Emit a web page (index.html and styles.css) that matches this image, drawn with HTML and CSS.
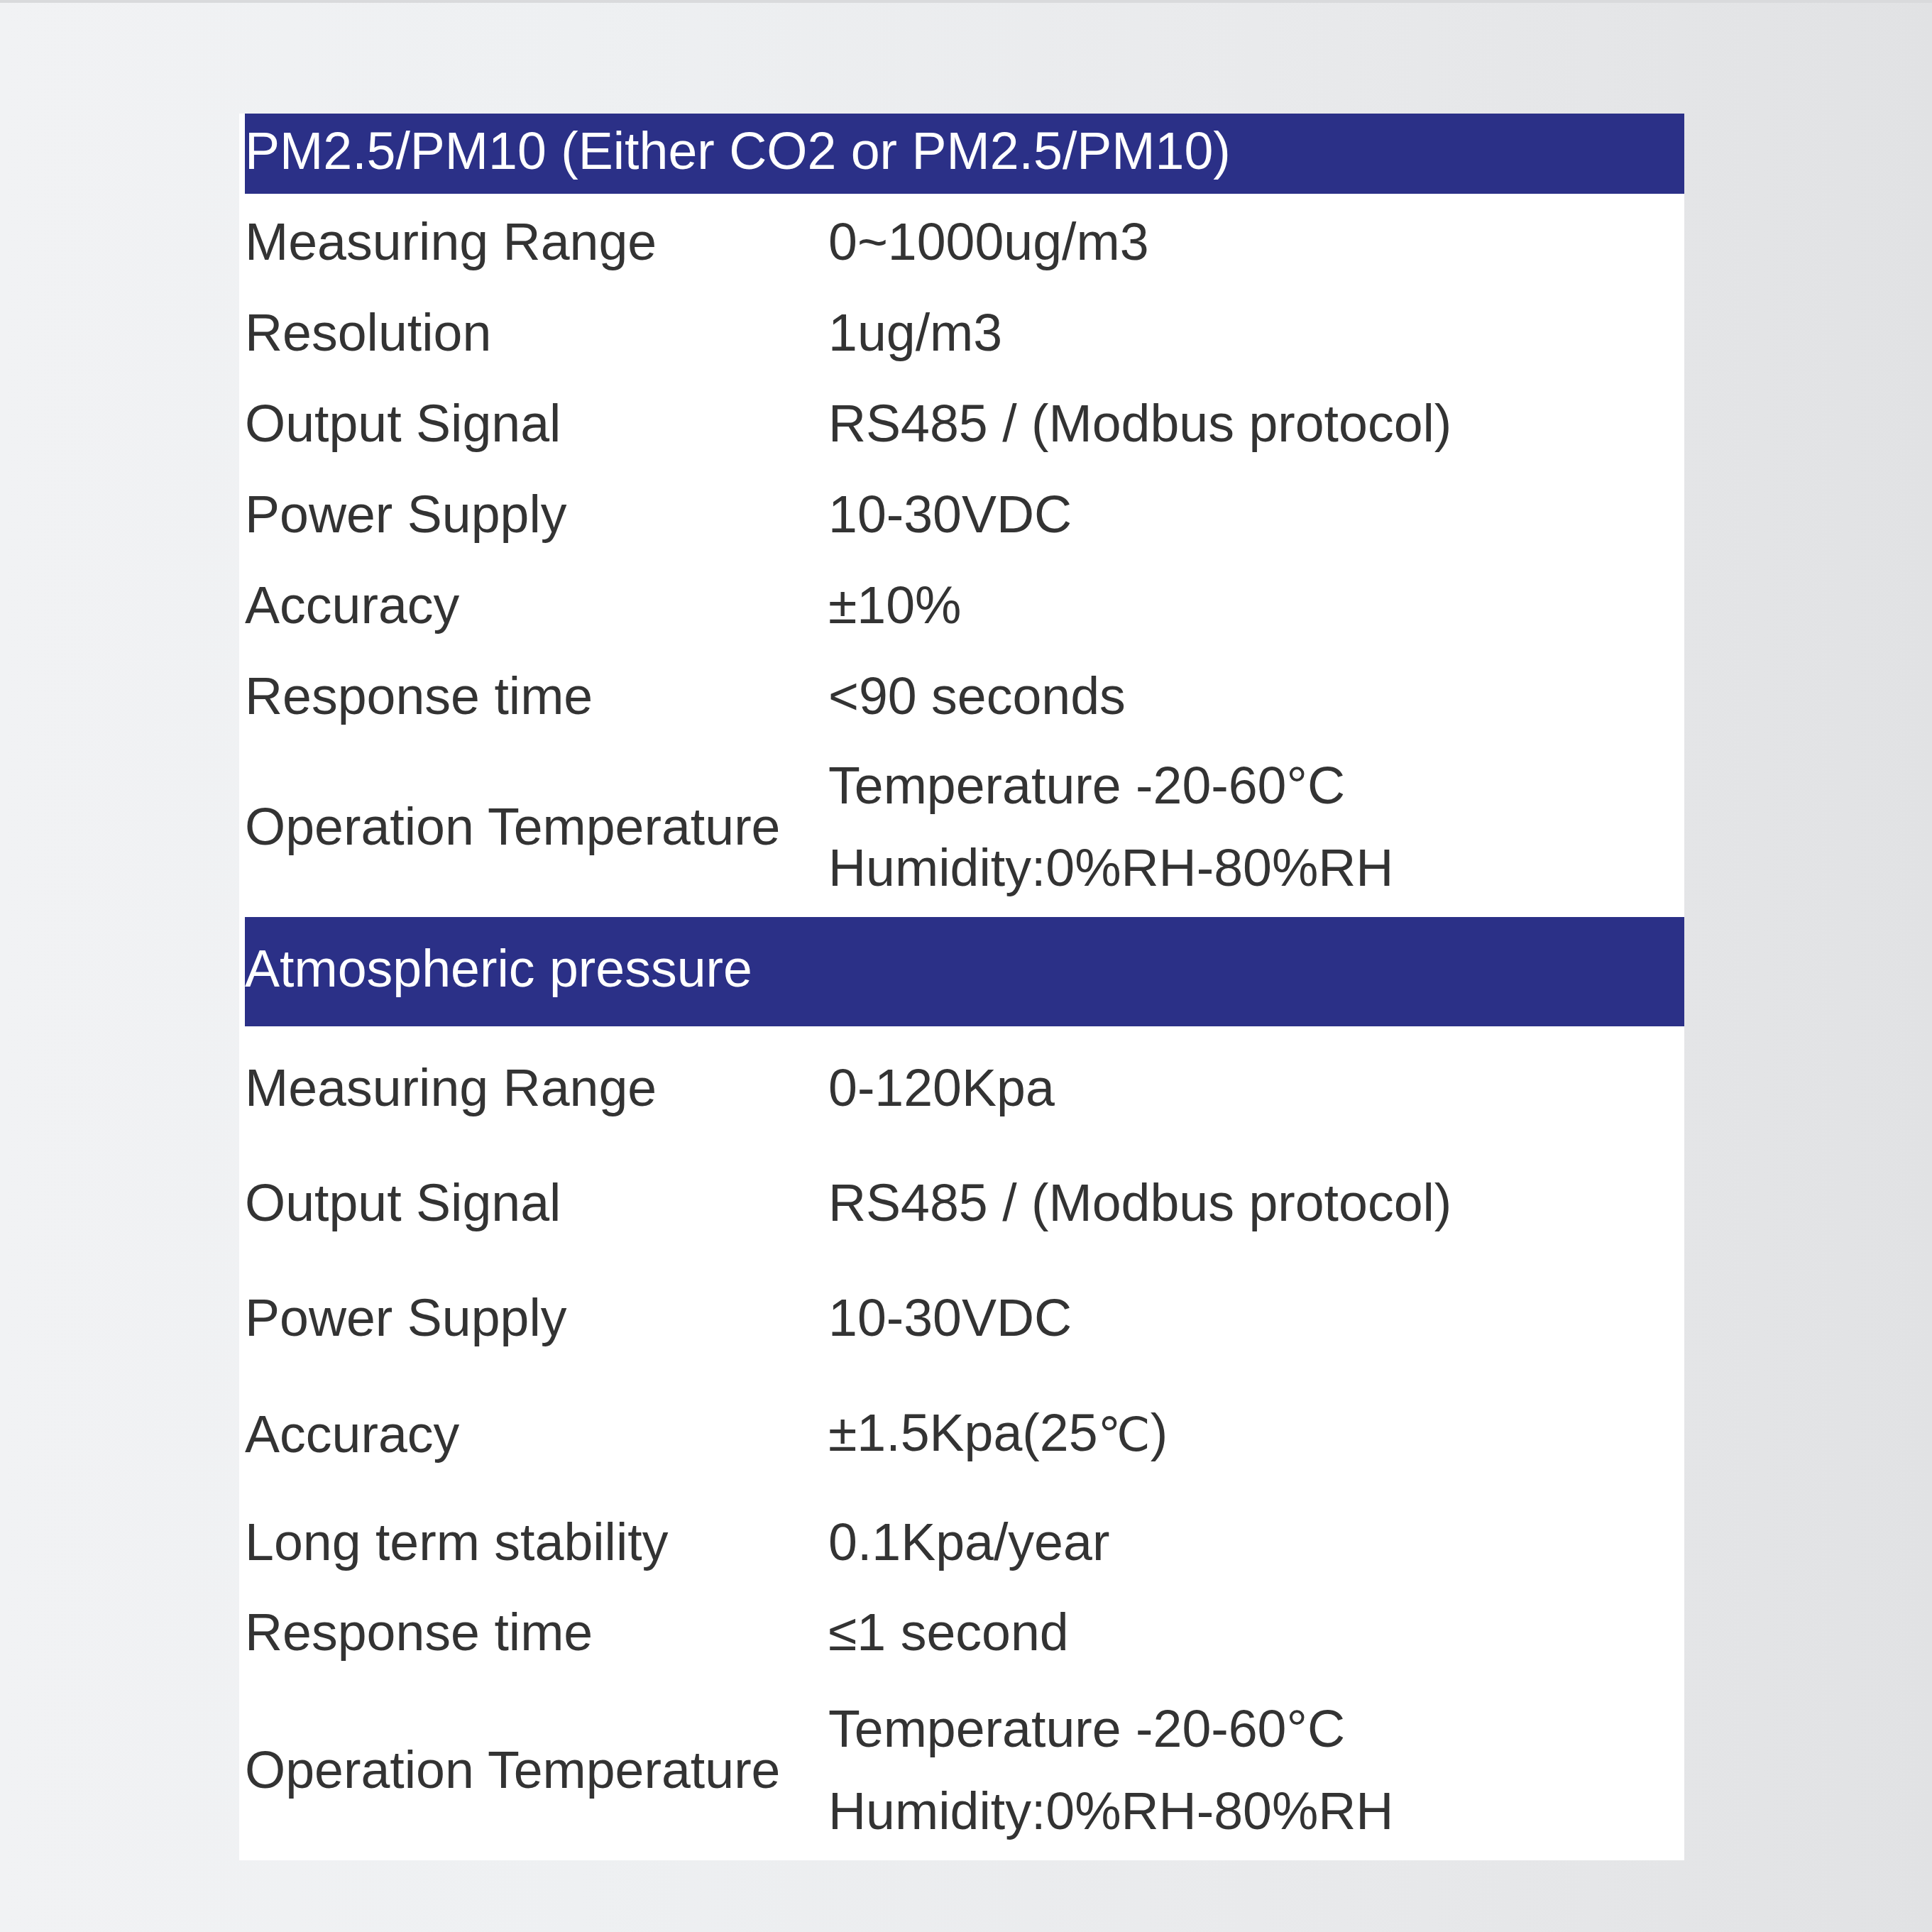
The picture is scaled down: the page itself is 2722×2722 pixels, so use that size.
FILE: index.html
```html
<!DOCTYPE html>
<html lang="en">
<head>
<meta charset="utf-8">
<title>Sensor specifications</title>
<link rel="stylesheet" href="styles.css">
</head>
<body>
<main class="page">
  <section class="spec-card">
    <h2 class="spec-head spec-head--pm">PM2.5/PM10 (Either CO2 or PM2.5/PM10)</h2>
    <table class="spec-table spec-table--pm">
      <tbody>
        <tr><td class="spec-label">Measuring Range</td><td class="spec-value">0~1000ug/m3</td></tr>
        <tr><td class="spec-label">Resolution</td><td class="spec-value">1ug/m3</td></tr>
        <tr><td class="spec-label">Output Signal</td><td class="spec-value">RS485 / (Modbus protocol)</td></tr>
        <tr><td class="spec-label">Power Supply</td><td class="spec-value">10-30VDC</td></tr>
        <tr><td class="spec-label">Accuracy</td><td class="spec-value">±10%</td></tr>
        <tr><td class="spec-label">Response time</td><td class="spec-value">&lt;90 seconds</td></tr>
        <tr class="spec-row--dual"><td class="spec-label">Operation Temperature</td><td class="spec-value">Temperature -20-60°C<br>Humidity:0%RH-80%RH</td></tr>
      </tbody>
    </table>
    <h2 class="spec-head spec-head--atm">Atmospheric pressure</h2>
    <table class="spec-table spec-table--atm">
      <tbody>
        <tr class="spec-row--tall"><td class="spec-label">Measuring Range</td><td class="spec-value">0-120Kpa</td></tr>
        <tr class="spec-row--tall"><td class="spec-label">Output Signal</td><td class="spec-value">RS485 / (Modbus protocol)</td></tr>
        <tr class="spec-row--tall"><td class="spec-label">Power Supply</td><td class="spec-value">10-30VDC</td></tr>
        <tr class="spec-row--tall"><td class="spec-label">Accuracy</td><td class="spec-value">±1.5Kpa(25<span class="deg">℃</span>)</td></tr>
        <tr class="spec-row--stab"><td class="spec-label">Long term stability</td><td class="spec-value">0.1Kpa/year</td></tr>
        <tr class="spec-row--resp"><td class="spec-label">Response time</td><td class="spec-value">≤1 second</td></tr>
        <tr class="spec-row--end"><td class="spec-label">Operation Temperature</td><td class="spec-value">Temperature -20-60°C<br>Humidity:0%RH-80%RH</td></tr>
      </tbody>
    </table>
  </section>
</main>
</body>
</html>
```

FILE: styles.css
```css
html, body {
  margin: 0;
  padding: 0;
}

body {
  width: 2722px;
  height: 2722px;
  overflow: hidden;
  background:
    linear-gradient(180deg, #d9dadc 0, #d9dadc 4px, transparent 4px),
    linear-gradient(90deg, #f1f2f4 0%, #eef0f2 30%, #e9eaec 65%, #e1e2e4 100%);
  font-family: "Liberation Sans", Arial, "Helvetica", sans-serif;
  color: #333333;
}

.page {
  padding: 160px 0 0 337px;
}

.spec-card {
  width: 2036px;
  background: #ffffff;
  padding-left: 8px;
  box-sizing: border-box;
}

.spec-head {
  margin: 0;
  background: #2b3087;
  color: #ffffff;
  font-weight: normal;
  font-size: 73.5px;
  white-space: nowrap;
  padding: 0 0 8px 0;
}

.spec-head--pm {
  line-height: 105px;
}

.spec-head--atm {
  line-height: 146px;
}

.spec-table {
  width: 100%;
  border-collapse: collapse;
  font-size: 73.5px;
  line-height: 116px;
}

.spec-table--pm {
  margin: 4px 0 3px;
}

.spec-table--atm {
  margin: 6px 0 0;
}

.spec-table td {
  padding: 6px 0;
  vertical-align: middle;
  white-space: nowrap;
}

.spec-label {
  width: 822px;
}

.spec-row--dual td {
  padding: 4px 0 8px;
}

.spec-row--tall td {
  padding: 23px 0;
}

.spec-row--stab td {
  padding: 12px 0 5px;
}

.spec-row--resp td {
  padding: 6px 0;
}

.spec-row--end td {
  padding: 14px 0 11px;
}

.deg {
  font-family: "DejaVu Sans", "Liberation Sans", sans-serif;
  font-size: 66px;
}
```
